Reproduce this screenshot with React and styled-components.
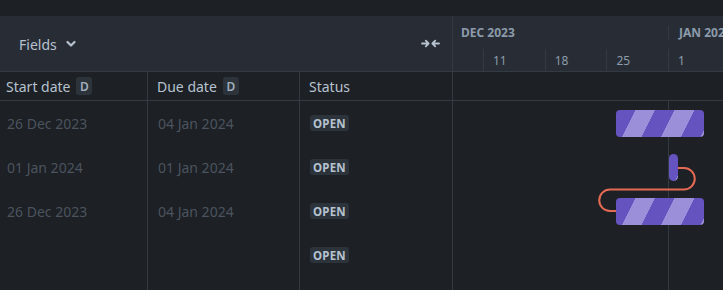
import styled, { createGlobalStyle } from "styled-components";

const GlobalStyle = createGlobalStyle`
  html, body {
    margin: 0;
    padding: 0;
    background: #1d2025;
  }
  body {
    font-family: "Noto Sans", "Open Sans", sans-serif;
    -webkit-font-smoothing: antialiased;
  }
`

const BORDER = "#343a42"
const HEADER_BG = "#282d35"
const WEEK = 61.7

const Page = styled.div`
  width: 723px;
  height: 290px;
  overflow: hidden;
  display: flex;
  flex-direction: column;
  background: #1d2025;
`

const TopStrip = styled.div`
  height: 16px;
  flex: none;
  background: #1d2025;
`

const Board = styled.div`
  flex: 1;
  display: flex;
  min-height: 0;
`

const LeftPane = styled.div`
  width: 452px;
  flex: none;
  display: flex;
  flex-direction: column;
  border-right: 1px solid ${BORDER};
`

const Toolbar = styled.div`
  height: 55px;
  flex: none;
  background: ${HEADER_BG};
  border-bottom: 1px solid ${BORDER};
  display: flex;
  align-items: center;
  justify-content: space-between;
  padding: 0 12px 0 19px;
`

const FieldsButton = styled.div`
  display: flex;
  align-items: center;
  gap: 9px;
  color: #b6c2cf;
  font-size: 14px;
  margin-top: 1px;
`

const Grid = styled.div`
  display: grid;
  grid-template-columns: 148px 152px 1fr;
`

const HeaderRow = styled(Grid)`
  height: 28px;
  flex: none;
  border-bottom: 1px solid ${BORDER};
`

const HeadCell = styled.div`
  display: flex;
  align-items: center;
  gap: 6px;
  padding-left: ${(p) => (p.$first ? "6px" : "9px")};
  color: #b6c2cf;
  font-size: 14px;
  border-right: ${(p) => (p.$last ? "none" : `1px solid ${BORDER}`)};
`

const KeyBadge = styled.span`
  display: inline-flex;
  align-items: center;
  justify-content: center;
  width: 16px;
  height: 18px;
  border-radius: 3px;
  background: #2c333b;
  color: #9fadbc;
  font-size: 12px;
  font-weight: 600;
`

const Body = styled(Grid)`
  flex: 1;
  min-height: 0;
  overflow: hidden;
  grid-template-rows: repeat(4, 44px) 1fr;
`

const Cell = styled.div`
  display: flex;
  align-items: center;
  padding-left: ${(p) => (p.$first ? "7px" : "10px")};
  color: #4b545e;
  font-size: 14px;
  border-right: ${(p) => (p.$last ? "none" : `1px solid ${BORDER}`)};
`

const FillCell = styled.div`
  border-right: ${(p) => (p.$last ? "none" : `1px solid ${BORDER}`)};
`

const Lozenge = styled.span`
  display: inline-flex;
  align-items: center;
  height: 16px;
  padding: 0 3px;
  border-radius: 3px;
  background: #2c333b;
  color: #b6c2cf;
  font-size: 11.5px;
  font-weight: 700;
  letter-spacing: 0.2px;
`

const Timeline = styled.div`
  flex: 1;
  display: flex;
  flex-direction: column;
  min-width: 0;
  overflow: hidden;
`

const TimelineHeader = styled.div`
  height: 55px;
  flex: none;
  background: ${HEADER_BG};
  border-bottom: 1px solid ${BORDER};
  display: flex;
  flex-direction: column;
`

const MonthRow = styled.div`
  display: flex;
  height: 33px;
  align-items: center;
  white-space: nowrap;
`

const Month = styled.div`
  flex: none;
  width: ${(p) => p.$w}px;
  height: 14px;
  display: flex;
  align-items: center;
  box-sizing: border-box;
  padding-left: ${(p) => (p.$first ? "8px" : "10px")};
  border-left: ${(p) => (p.$first ? "none" : `1px solid ${BORDER}`)};
  color: #8c9bab;
  font-size: 12px;
  font-weight: 700;
`

const WeekRow = styled.div`
  flex: 1;
  display: flex;
  white-space: nowrap;
`

const Week = styled.div`
  flex: none;
  width: ${(p) => p.$w}px;
  box-sizing: border-box;
  border-left: ${(p) => (p.$lead ? "none" : `1px solid ${BORDER}`)};
  padding: 3px 0 0 9px;
  color: #8c9bab;
  font-size: 12px;
`

const TimelineSubHead = styled.div`
  height: 28px;
  flex: none;
  border-bottom: 1px solid ${BORDER};
`

const Canvas = styled.div`
  flex: 1;
  position: relative;
`

const MonthLine = styled.div`
  position: absolute;
  top: 0;
  bottom: 0;
  left: ${(p) => p.$x}px;
  width: 1px;
  background: ${BORDER};
`

const Bar = styled.div`
  position: absolute;
  left: ${(p) => p.$x}px;
  top: ${(p) => p.$y}px;
  width: ${(p) => p.$w}px;
  height: 27px;
  border-radius: ${(p) => (p.$milestone ? "5px" : "4px")};
  background: repeating-linear-gradient(
    116.57deg,
    #6554c0 0 17.5px,
    #9a8fd8 17.5px 35px
  );
`

const Links = styled.svg`
  position: absolute;
  inset: 0;
  width: 100%;
  height: 100%;
  pointer-events: none;
`

const rows = [
  { start: "26 Dec 2023", due: "04 Jan 2024" },
  { start: "01 Jan 2024", due: "01 Jan 2024" },
  { start: "26 Dec 2023", due: "04 Jan 2024" },
  { start: "", due: "" },
]

const weeks = ["", "11", "18", "25", "1"]

const Chevron = () => (
  <svg width="10" height="8" viewBox="0 0 10 8">
    <path d="M1.5 2 L5 5.5 L8.5 2" fill="none" stroke="#b6c2cf" strokeWidth="2.2" strokeLinecap="round" strokeLinejoin="round" />
  </svg>
)

const CollapseIcon = () => (
  <svg width="19" height="9" viewBox="0 0 19 9">
    <g fill="none" stroke="#b6c2cf" strokeWidth="1.8" strokeLinecap="round" strokeLinejoin="round">
      <path d="M1 4.5 H7.5 M4.8 1.6 L7.6 4.5 L4.8 7.4" />
      <path d="M18 4.5 H11.5 M14.2 1.6 L11.4 4.5 L14.2 7.4" />
    </g>
  </svg>
)

export default function App() {
  return (
    <Page>
      <GlobalStyle />
      <TopStrip />
      <Board>
        <LeftPane>
          <Toolbar>
            <FieldsButton>
              Fields <Chevron />
            </FieldsButton>
            <CollapseIcon />
          </Toolbar>
          <HeaderRow>
            <HeadCell $first>
              Start date <KeyBadge>D</KeyBadge>
            </HeadCell>
            <HeadCell>
              Due date <KeyBadge>D</KeyBadge>
            </HeadCell>
            <HeadCell $last>Status</HeadCell>
          </HeaderRow>
          <Body>
            {rows.map((r, i) => [
              r.start ? <Cell key={`s${i}`} $first>{r.start}</Cell> : <FillCell key={`s${i}`} />,
              r.due ? <Cell key={`d${i}`}>{r.due}</Cell> : <FillCell key={`d${i}`} />,
              <Cell key={`t${i}`} $last>
                <Lozenge>OPEN</Lozenge>
              </Cell>,
            ])}
            <FillCell />
            <FillCell />
            <FillCell $last />
          </Body>
        </LeftPane>

        <Timeline>
          <TimelineHeader>
            <MonthRow>
              <Month $first $w={215}>DEC 2023</Month>
              <Month $w={120}>JAN 2024</Month>
            </MonthRow>
            <WeekRow>
              {weeks.map((w, i) => (
                <Week key={i} $lead={i === 0} $w={i === 0 ? 30 : WEEK}>
                  {w}
                </Week>
              ))}
            </WeekRow>
          </TimelineHeader>
          <TimelineSubHead />
          <Canvas>
            <MonthLine $x={215} />
            <Bar $x={163} $y={9} $w={88} />
            <Bar $x={216} $y={53} $w={9} $milestone />
            <Bar $x={163} $y={97} $w={88} />
            <Links>
              <path
                d="M225 67 H231 A10.75 10.75 0 0 1 231 88.5 H157 A10.75 10.75 0 0 0 157 110 H163"
                fill="none"
                stroke="#e56a54"
                strokeWidth="2"
              />
            </Links>
          </Canvas>
        </Timeline>
      </Board>
    </Page>
  )
}
